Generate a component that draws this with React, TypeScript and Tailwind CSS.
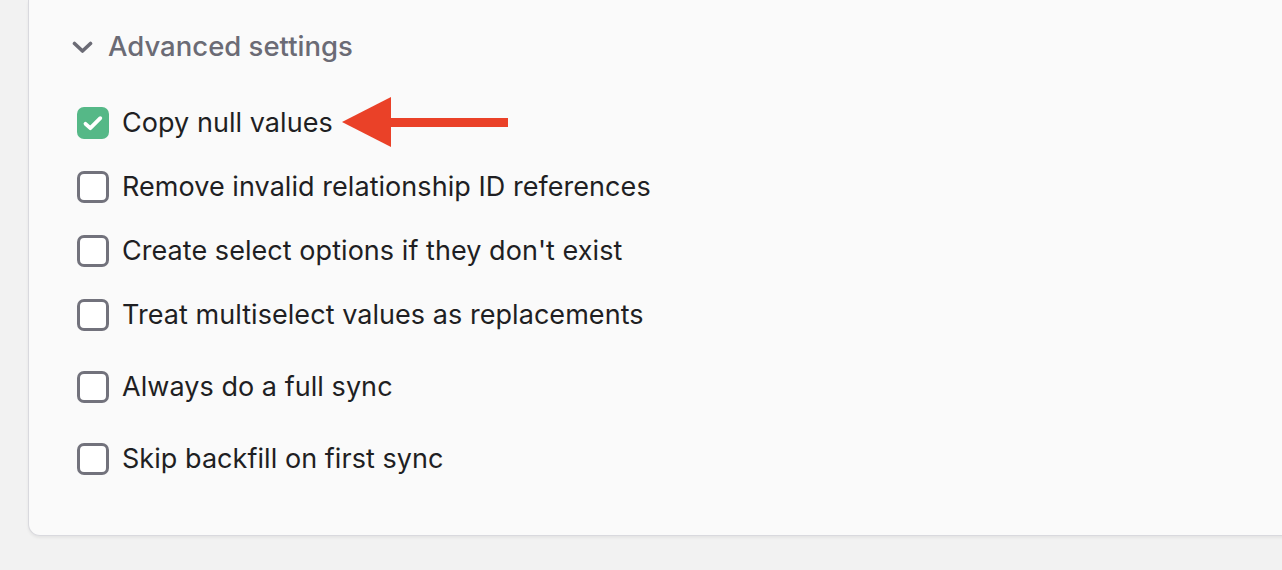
import React from 'react'

type Opt = { label: string; checked?: boolean; spaced?: boolean }

const options: Opt[] = [
  { label: 'Copy null values', checked: true },
  { label: 'Remove invalid relationship ID references' },
  { label: "Create select options if they don't exist" },
  { label: 'Treat multiselect values as replacements' },
  { label: 'Always do a full sync', spaced: true },
  { label: 'Skip backfill on first sync', spaced: true },
]

function Box({ checked }: { checked?: boolean }) {
  if (checked) {
    return (
      <span className="flex h-[32px] w-[32px] shrink-0 items-center justify-center rounded-[7px] bg-[#55b887]">
        <svg width="22" height="22" viewBox="0 0 22 22" fill="none">
          <path d="M3.5 11.8l4.8 4.4 10-10" stroke="white" strokeWidth="3.8" strokeLinecap="round" strokeLinejoin="round" />
        </svg>
      </span>
    )
  }
  return <span className="h-[32px] w-[32px] shrink-0 rounded-[7px] border-[3px] border-[#72727c] bg-white" />
}

function Arrow() {
  return (
    <svg className="ml-[8px]" width="170" height="52" viewBox="0 0 170 52">
      <polygon points="1,25 50,0 50,50" fill="#ea4128" />
      <rect x="48" y="21" width="119" height="9" fill="#ea4128" />
    </svg>
  )
}

export default function App() {
  return (
    <div className="h-[570px] w-full overflow-hidden bg-[#f2f2f2] font-['Inter',sans-serif]">
      <div className="ml-[28px] mr-[-20px] rounded-b-[12px] border border-t-0 border-[#d9d9de] bg-[#fafafa] pb-[44px] pl-[44px] pt-[27px] shadow-[0_2px_3px_rgba(0,0,0,0.06)]">
        <div className="flex h-[40px] items-center gap-[15px] text-[#6b6b75]">
          <svg className="ml-[-1px]" width="21" height="13" viewBox="0 0 21 13" fill="none">
            <path d="M2.5 2.5l8 7.5 8-7.5" stroke="currentColor" strokeWidth="3.6" strokeLinecap="round" strokeLinejoin="round" />
          </svg>
          <span className="text-[27.5px] font-medium">Advanced settings</span>
        </div>
        <div className="mt-[24px] pl-[4px]">
          {options.map((o) => (
            <div key={o.label} className={'flex h-[64px] items-center ' + (o.spaced ? 'mt-[8px]' : '')}>
              <Box checked={o.checked} />
              <span className="ml-[13px] text-[27px] tracking-[0.05px] text-[#1f1f23]">{o.label}</span>
              {o.checked ? <Arrow /> : null}
            </div>
          ))}
        </div>
      </div>
    </div>
  )
}
